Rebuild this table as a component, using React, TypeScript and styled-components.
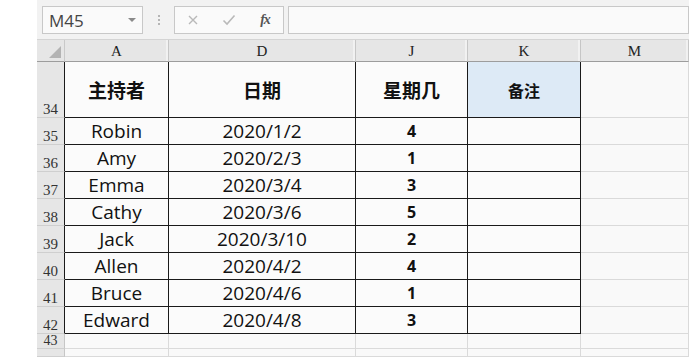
import React from "react";
import styled, { createGlobalStyle } from "styled-components";

const GlobalStyle = createGlobalStyle`
  html, body { margin: 0; padding: 0; background: #ffffff; }
  body { width: 689px; height: 357px; overflow: hidden; }
  * { box-sizing: border-box; }
`;

const Page = styled.div`
  display: flex;
  width: 689px;
  height: 357px;
  overflow: hidden;
`;

const Gutter = styled.div`
  width: 37px;
  flex: none;
  background: #ffffff;
`;

const Excel = styled.div`
  flex: 1;
  display: flex;
  flex-direction: column;
  background: #f3f3f3;
  min-width: 0;
`;

const Toolbar = styled.div`
  height: 40px;
  flex: none;
  display: flex;
  align-items: flex-start;
  padding: 6px 0 0 5px;
  border-bottom: 1px solid #d4d4d4;
  background: #f2f2f2;
`;

const Field = styled.div<{ $width?: number }>`
  height: 28px;
  ${(p) => (p.$width ? `width: ${p.$width}px; flex: none;` : "flex: 1;")}
  background: #fafafa;
  border: 1px solid #c8c8c8;
  display: flex;
  align-items: center;
`;

const NameText = styled.span`
  flex: 1;
  padding-left: 6px;
  font-family: "Open Sans", "Noto Sans", sans-serif;
  font-size: 17px;
  color: #454545;
`;

const DropArrow = styled.span`
  width: 0;
  height: 0;
  margin-right: 6px;
  border-left: 4px solid transparent;
  border-right: 4px solid transparent;
  border-top: 4px solid #8a8a8a;
`;

const Grip = styled.div`
  width: 31px;
  flex: none;
  height: 28px;
  display: flex;
  flex-direction: column;
  align-items: center;
  justify-content: center;
  gap: 2px;
  & > i {
    display: block;
    width: 2px;
    height: 2px;
    background: #b5b5b5;
  }
`;

const FxButton = styled.span<{ $dim?: boolean }>`
  width: 36px;
  display: flex;
  align-items: center;
  justify-content: center;
  color: ${(p) => (p.$dim ? "#b9b9b9" : "#555555")};
`;

const FxLabel = styled.span`
  font-family: "Liberation Serif", "DejaVu Serif", serif;
  font-style: italic;
  font-weight: bold;
  font-size: 14px;
  color: #555;
  letter-spacing: -1px;
`;

const Gap = styled.div`
  width: 4px;
  flex: none;
`;

const Sheet = styled.div`
  flex: 1;
  display: grid;
  grid-template-columns: 28px 104px 187px 112px 113px 1fr;
  grid-template-rows: 22px 56px repeat(8, 27px) 15px 1fr;
  background: #f9f9f9;
  min-height: 0;
  overflow: hidden;
`;

const Corner = styled.div`
  background: #e6e6e6;
  border-right: 1px solid #c9c9c9;
  border-bottom: 1px solid #9d9d9d;
  display: flex;
  align-items: flex-end;
  justify-content: flex-end;
  padding: 0 3px 3px 0;
`;

const Triangle = styled.span`
  width: 0;
  height: 0;
  border-left: 12px solid transparent;
  border-bottom: 12px solid #b3b3b3;
`;

const ColHead = styled.div`
  background: #e6e6e6;
  border-right: 1px solid #c6c6c6;
  box-shadow: inset -2px 0 0 #f1f1f1;
  border-bottom: 1px solid #9d9d9d;
  display: flex;
  align-items: flex-end;
  justify-content: center;
  padding-bottom: 1px;
  font-family: "Liberation Serif", "DejaVu Serif", serif;
  font-size: 15px;
  color: #222;
`;

const RowHead = styled.div<{ $dark?: boolean; $short?: boolean }>`
  background: #e6e6e6;
  border-right: 1px solid ${(p) => (p.$dark ? "#1a1a1a" : "#c6c6c6")};
  border-bottom: 1px solid #cfcfcf;
  display: flex;
  align-items: flex-end;
  justify-content: center;
  overflow: hidden;
  font-family: "Liberation Serif", "DejaVu Serif", serif;
  font-size: ${(p) => (p.$short ? "14px" : "15px")};
  line-height: ${(p) => (p.$short ? "14px" : "16px")};
  color: #333;
  padding-bottom: 0;
`;

type Kind = "title" | "name" | "num" | "note" | "plain";

const Cell = styled.div<{ $table?: boolean; $kind?: Kind; $fill?: string }>`
  background: ${(p) => p.$fill || (p.$table ? "#fbfbfb" : "#f9f9f9")};
  border-right: 1px solid ${(p) => (p.$table ? "#1a1a1a" : "#dadada")};
  border-bottom: 1px solid ${(p) => (p.$table ? "#1a1a1a" : "#dadada")};
  display: flex;
  align-items: center;
  justify-content: center;
  overflow: hidden;
  color: #111;
  font-family: "Open Sans", "Noto Sans", "Noto Sans CJK SC", sans-serif;
  font-size: ${(p) =>
    p.$kind === "note" ? "16px" : p.$kind === "num" ? "16px" : "19px"};
  font-weight: ${(p) => (p.$kind === "name" ? 400 : 700)};
  padding-bottom: ${(p) => (p.$kind === "name" ? "1px" : "0")};
  & > span {
    font-family: "Noto Sans CJK SC", sans-serif;
  }
`;

const columns = ["A", "D", "J", "K", "M"];

const rows: { n: number; name: string; date: string; day: string }[] = [
  { n: 35, name: "Robin", date: "2020/1/2", day: "4" },
  { n: 36, name: "Amy", date: "2020/2/3", day: "1" },
  { n: 37, name: "Emma", date: "2020/3/4", day: "3" },
  { n: 38, name: "Cathy", date: "2020/3/6", day: "5" },
  { n: 39, name: "Jack", date: "2020/3/10", day: "2" },
  { n: 40, name: "Allen", date: "2020/4/2", day: "4" },
  { n: 41, name: "Bruce", date: "2020/4/6", day: "1" },
  { n: 42, name: "Edward", date: "2020/4/8", day: "3" },
];

const CrossIcon = () => (
  <svg width="12" height="12" viewBox="0 0 12 12">
    <path d="M2 2 L10 10 M10 2 L2 10" stroke="currentColor" strokeWidth="1.4" fill="none" />
  </svg>
);

const CheckIcon = () => (
  <svg width="14" height="12" viewBox="0 0 14 12">
    <path d="M1.5 6.5 L5 10 L12.5 1.5" stroke="currentColor" strokeWidth="1.6" fill="none" />
  </svg>
);

export default function App() {
  return (
    <>
      <GlobalStyle />
      <Page>
        <Gutter />
        <Excel>
          <Toolbar>
            <Field $width={101}>
              <NameText>M45</NameText>
              <DropArrow />
            </Field>
            <Grip>
              <i />
              <i />
              <i />
            </Grip>
            <Field $width={110}>
              <FxButton $dim>
                <CrossIcon />
              </FxButton>
              <FxButton $dim>
                <CheckIcon />
              </FxButton>
              <FxButton>
                <FxLabel>fx</FxLabel>
              </FxButton>
            </Field>
            <Gap />
            <Field />
          </Toolbar>
          <Sheet>
            <Corner>
              <Triangle />
            </Corner>
            {columns.map((c) => (
              <ColHead key={c}>{c}</ColHead>
            ))}

            <RowHead $dark>34</RowHead>
            <Cell $table $kind="title">
              <span>主持者</span>
            </Cell>
            <Cell $table $kind="title">
              <span>日期</span>
            </Cell>
            <Cell $table $kind="title">
              <span>星期几</span>
            </Cell>
            <Cell $table $kind="note" $fill="#ddeaf6">
              <span>备注</span>
            </Cell>
            <Cell />

            {rows.map((r) => (
              <React.Fragment key={r.n}>
                <RowHead $dark>{r.n}</RowHead>
                <Cell $table $kind="name">
                  {r.name}
                </Cell>
                <Cell $table $kind="name">
                  {r.date}
                </Cell>
                <Cell $table $kind="num">
                  {r.day}
                </Cell>
                <Cell $table />
                <Cell />
              </React.Fragment>
            ))}

            <RowHead $short>43</RowHead>
            <Cell />
            <Cell />
            <Cell />
            <Cell />
            <Cell />

            <RowHead />
            <Cell />
            <Cell />
            <Cell />
            <Cell />
            <Cell />
          </Sheet>
        </Excel>
      </Page>
    </>
  );
}
